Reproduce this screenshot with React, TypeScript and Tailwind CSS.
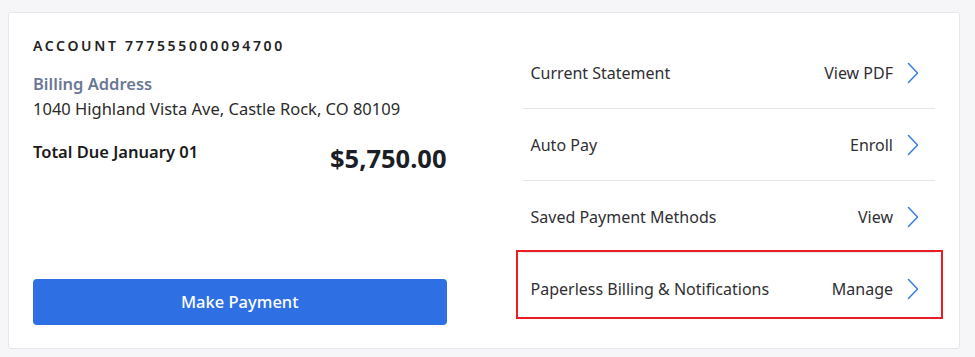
const rows = [
  { label: 'Current Statement', action: 'View PDF' },
  { label: 'Auto Pay', action: 'Enroll' },
  { label: 'Saved Payment Methods', action: 'View' },
  { label: 'Paperless Billing & Notifications', action: 'Manage', highlight: true },
];

function Chevron() {
  return (
    <svg width="12" height="22" viewBox="0 0 12 22" fill="none" className="shrink-0">
      <polyline points="1.5,1.5 10.5,11 1.5,20.5" stroke="#3f7ee8" strokeWidth="1.6" strokeLinecap="round" strokeLinejoin="round" />
    </svg>
  );
}

export default function App() {
  return (
    <div
      className="w-[975px] h-[357px] bg-[#f6f6f8] pt-[12px] pl-[8px]"
      style={{ fontFamily: '"Noto Sans", "Open Sans", Arial, sans-serif' }}
    >
      <div className="w-[952px] h-[337px] bg-white border border-[#e6e7ee] rounded-[3px] px-[24px] pt-[24px] pb-[26px] grid grid-cols-2 gap-x-[75px]">
        {/* left: account summary */}
        <div className="flex flex-col">
          <div className="text-[14px] leading-[18px] font-semibold tracking-[0.19em] text-[#222]">
            ACCOUNT 777555000094700
          </div>
          <div className="mt-[17px] text-[16.5px] leading-[24px] font-semibold text-[#6b7895]">Billing Address</div>
          <div className="mt-[1px] text-[16.5px] leading-[24px] text-[#2b2b2b]">
            1040 Highland Vista Ave, Castle Rock, CO 80109
          </div>
          <div className="mt-[19px] flex justify-between items-start">
            <span className="text-[16.5px] leading-[24px] font-semibold text-[#1a1a1a]">Total Due January 01</span>
            <span className="mt-[2px] text-[25.5px] leading-[32px] font-bold text-[#1b1e27]">$5,750.00</span>
          </div>
          <button className="mt-auto h-[46px] w-full rounded-[4px] bg-[#2f6fe4] text-white text-[16.5px] font-medium">
            Make Payment
          </button>
        </div>

        {/* right: links */}
        <div className="flex flex-col">
          {rows.map((r, i) => (
            <div
              key={r.label}
              className={`relative h-[72px] flex items-center justify-between pl-[9px] pr-[16px] ${
                i < rows.length - 1 ? 'border-b border-[#e5e7ef]' : ''
              }`}
            >
              <span className="text-[16px] text-[#2f2f33]">{r.label}</span>
              <span className="flex items-center gap-[14px]">
                <span className="text-[16px] text-[#2f2f33]">{r.action}</span>
                <Chevron />
              </span>
              {r.highlight && (
                <div className="absolute left-[-6px] right-[-8px] top-[-3px] bottom-[6px] border-2 border-[#ec1c24] pointer-events-none" />
              )}
            </div>
          ))}
        </div>
      </div>
    </div>
  );
}
